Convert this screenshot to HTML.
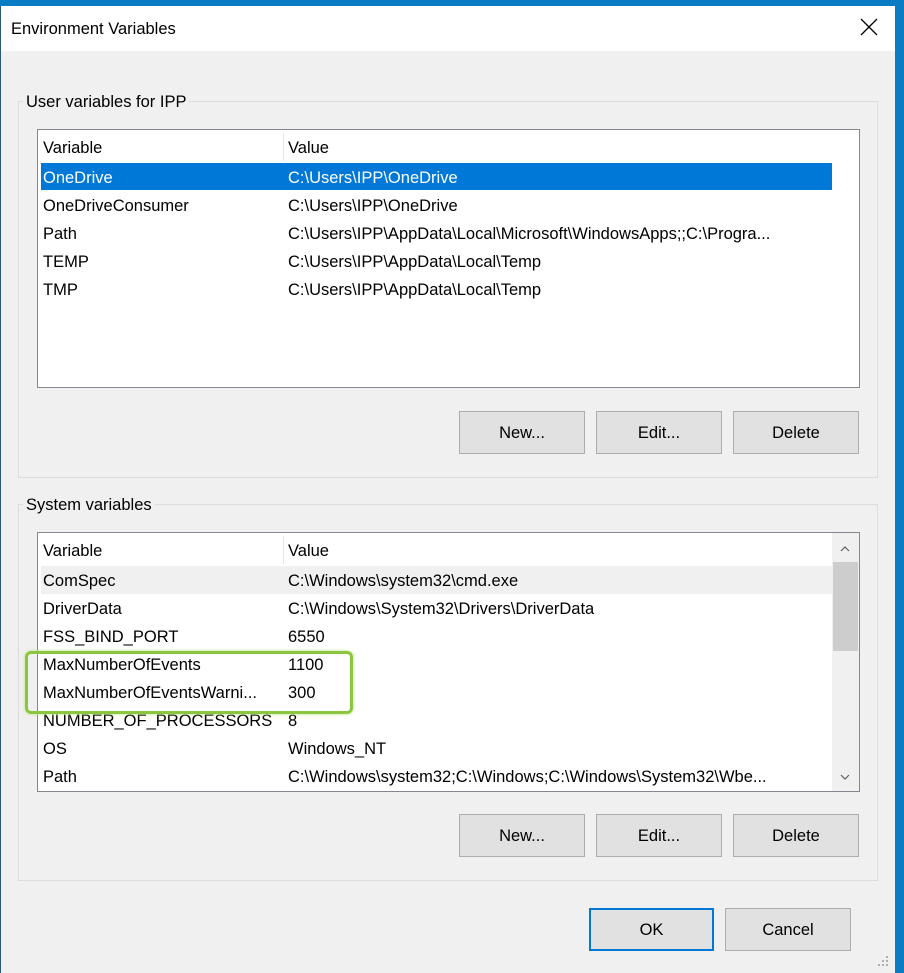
<!DOCTYPE html>
<html><head><style>
*{margin:0;padding:0;box-sizing:border-box}
body{width:904px;height:973px;background:#0a7cc4;position:relative;overflow:hidden;font-family:"Liberation Sans",sans-serif;font-size:16px;color:#000}
.win{position:absolute;left:0;top:6px;width:895px;height:967px;background:#f0f0f0;box-shadow:inset 1px 0 0 #2a5a7a}
.title{position:absolute;left:1px;top:0;width:894px;height:45px;background:#fff}
.title span{position:absolute;left:10px;top:14px;font-size:16.5px}
.x{position:absolute;left:859px;top:12px}
.grp{position:absolute;border:1px solid #dcdcdc}
.lbl{position:absolute;background:#f0f0f0;padding:0 3px;font-size:16.5px}
.list{position:absolute;background:#fff;border:1px solid #828790;overflow:hidden}
.row{position:absolute;left:3px;width:790px;height:28px;line-height:30px;font-size:16.5px}
.row span{position:absolute}
.row .a{left:2px}.row .b{left:247px}
.sel{background:#0078d7;color:#fff}
.hdiv{position:absolute;left:245px;top:3px;width:1px;height:28px;background:#e5e5e5}
.btn{position:absolute;width:126px;height:43px;background:#e1e1e1;border:1px solid #adadad;text-align:center;line-height:43px;font-size:16.5px}
</style></head><body>
<div class="win">
<div class="title"><span>Environment Variables</span>
<svg class="x" width="18" height="18" viewBox="0 0 18 18"><path d="M1 1L17 17M17 1L1 17" stroke="#000" stroke-width="1.3"/></svg></div>

<div class="grp" style="left:18px;top:95px;width:860px;height:377px"></div>
<div class="lbl" style="left:23px;top:87px">User variables for IPP</div>
<div class="list" style="left:37px;top:123px;width:823px;height:259px">
<div class="hdiv"></div>
<div class="row" style="top:3px"><span class="a">Variable</span><span class="b">Value</span></div>
<div class="row sel" style="top:33px;height:27px;width:791px"><span class="a">OneDrive</span><span class="b">C:\Users\IPP\OneDrive</span></div>
<div class="row" style="top:61px"><span class="a">OneDriveConsumer</span><span class="b">C:\Users\IPP\OneDrive</span></div>
<div class="row" style="top:89px"><span class="a">Path</span><span class="b">C:\Users\IPP\AppData\Local\Microsoft\WindowsApps;;C:\Progra...</span></div>
<div class="row" style="top:117px"><span class="a">TEMP</span><span class="b">C:\Users\IPP\AppData\Local\Temp</span></div>
<div class="row" style="top:145px"><span class="a">TMP</span><span class="b">C:\Users\IPP\AppData\Local\Temp</span></div>
</div>
<div class="btn" style="left:459px;top:405px">New...</div>
<div class="btn" style="left:596px;top:405px">Edit...</div>
<div class="btn" style="left:733px;top:405px">Delete</div>

<div class="grp" style="left:18px;top:498px;width:860px;height:377px"></div>
<div class="lbl" style="left:23px;top:490px">System variables</div>
<div class="list" style="left:37px;top:526px;width:823px;height:260px">
<div class="hdiv"></div>
<div class="row" style="top:3px"><span class="a">Variable</span><span class="b">Value</span></div>
<div class="row" style="top:33px;background:#f0f0f0;width:791px"><span class="a">ComSpec</span><span class="b">C:\Windows\system32\cmd.exe</span></div>
<div class="row" style="top:61px"><span class="a">DriverData</span><span class="b">C:\Windows\System32\Drivers\DriverData</span></div>
<div class="row" style="top:89px"><span class="a">FSS_BIND_PORT</span><span class="b">6550</span></div>
<div class="row" style="top:117px"><span class="a">MaxNumberOfEvents</span><span class="b">1100</span></div>
<div class="row" style="top:145px"><span class="a">MaxNumberOfEventsWarni...</span><span class="b">300</span></div>
<div class="row" style="top:173px"><span class="a">NUMBER_OF_PROCESSORS</span><span class="b">8</span></div>
<div class="row" style="top:201px"><span class="a">OS</span><span class="b">Windows_NT</span></div>
<div class="row" style="top:229px"><span class="a">Path</span><span class="b">C:\Windows\system32;C:\Windows;C:\Windows\System32\Wbe...</span></div>
<div style="position:absolute;left:794px;top:0;width:27px;height:258px;background:#f0f0f0"></div>
<div style="position:absolute;left:795px;top:29px;width:25px;height:89px;background:#cdcdcd"></div>
<svg style="position:absolute;left:802px;top:12px" width="10" height="8"><path d="M1 6L5 2L9 6" stroke="#606060" fill="none" stroke-width="1.2"/></svg>
<svg style="position:absolute;left:802px;top:240px" width="10" height="8"><path d="M1 2L5 6L9 2" stroke="#606060" fill="none" stroke-width="1.2"/></svg>
</div>
<div style="position:absolute;left:25px;top:645px;width:328px;height:63px;border:3px solid #8cc63f;border-radius:6px;box-shadow:0 0 3px #b7e07a"></div>
<div class="btn" style="left:459px;top:808px">New...</div>
<div class="btn" style="left:596px;top:808px">Edit...</div>
<div class="btn" style="left:733px;top:808px">Delete</div>

<div class="btn" style="left:589px;top:902px;width:125px;border:2px solid #0078d7;line-height:41px">OK</div>
<div class="btn" style="left:725px;top:902px">Cancel</div>
<svg style="position:absolute;left:876px;top:948px" width="14" height="14"><g fill="#b0b0b0"><rect x="10" y="2" width="2" height="2"/><rect x="6" y="6" width="2" height="2"/><rect x="10" y="6" width="2" height="2"/><rect x="2" y="10" width="2" height="2"/><rect x="6" y="10" width="2" height="2"/><rect x="10" y="10" width="2" height="2"/></g></svg>
</div>
</body></html>
